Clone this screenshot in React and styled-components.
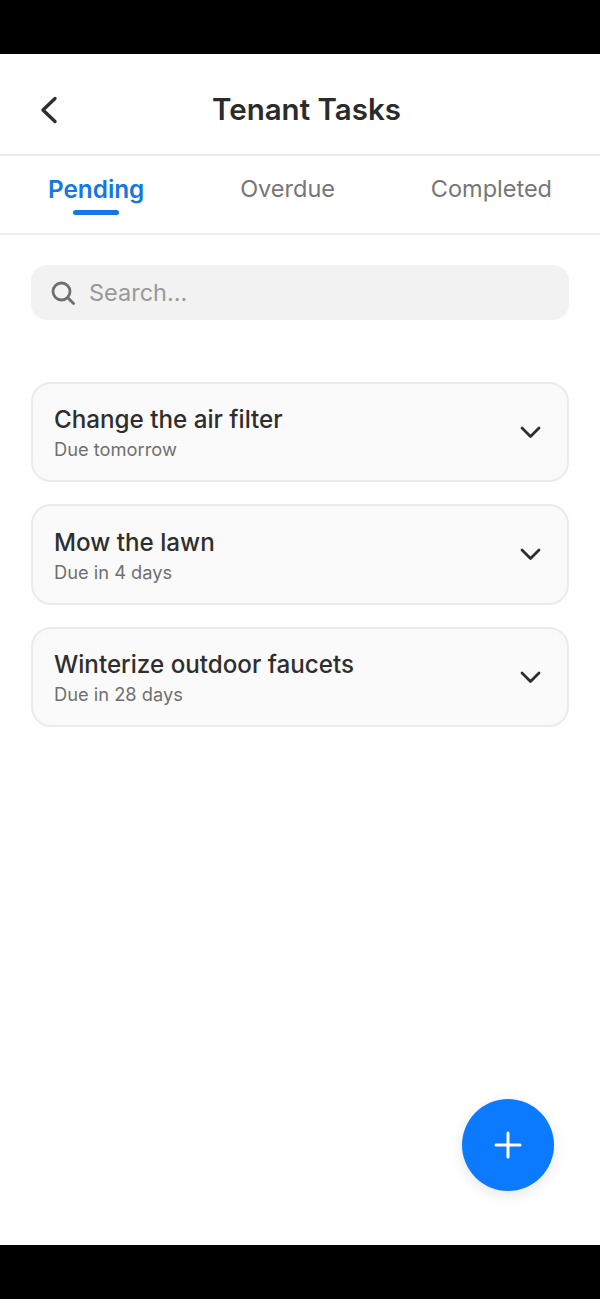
import styled, { createGlobalStyle } from "styled-components";

const GlobalStyle = createGlobalStyle`
  html, body {
    margin: 0;
    padding: 0;
    background: #000;
  }
  * {
    box-sizing: border-box;
  }
`;

const Page = styled.div`
  width: 600px;
  height: 1299px;
  padding: 54px 0;
  background: #000;
  font-family: Inter, "Liberation Sans", sans-serif;
`;

const Screen = styled.div`
  position: relative;
  height: 1191px;
  background: #fff;
`;

const Header = styled.header`
  display: flex;
  align-items: center;
  height: 102px;
  padding: 10px 46px 0 39px;
  border-bottom: 2px solid #ececec;
`;

const BackButton = styled.div`
  display: flex;
  width: 20px;
  height: 28px;
  margin-top: 1px;
  color: #2e2e2e;
`;

const Title = styled.h1`
  flex: 1;
  margin: 0;
  font-size: 29.5px;
  line-height: 34px;
  font-weight: 600;
  text-align: center;
  color: #2b2b2b;
`;

const Tabs = styled.nav`
  display: flex;
  justify-content: space-between;
  height: 79px;
  padding: 0 48px;
  border-bottom: 2px solid #efefef;
`;

const Tab = styled.div`
  position: relative;
  padding-top: 18px;
  font-size: ${(p) => (p.$active ? "24.3px" : "23.5px")};
  line-height: 30px;
  font-weight: ${(p) => (p.$active ? 600 : 400)};
  color: ${(p) => (p.$active ? "#1477e6" : "#767676")};
`;

const Underline = styled.span`
  position: absolute;
  left: 50%;
  bottom: 18px;
  width: 46px;
  height: 5px;
  margin-left: -23px;
  border-radius: 3px;
  background: #1477e6;
`;

const Content = styled.main`
  display: flex;
  flex-direction: column;
  padding: 30px 31px 0;
`;

const Search = styled.div`
  display: flex;
  align-items: center;
  gap: 14px;
  height: 55px;
  padding: 0 20px;
  border-radius: 16px;
  background: #f2f2f2;
  color: #6e6e6e;
  font-size: 23.5px;
`;

const Placeholder = styled.span`
  color: #999;
`;

const TaskList = styled.div`
  display: flex;
  flex-direction: column;
  gap: 22px;
  margin-top: 61.5px;
`;

const Card = styled.div`
  display: flex;
  align-items: center;
  justify-content: space-between;
  height: 100.5px;
  padding: 0 26.5px 0 21px;
  border: 2px solid #ebebeb;
  border-radius: 20px;
  background: #fafafa;
`;

const CardText = styled.div`
  display: flex;
  flex-direction: column;
  gap: 2px;
  padding-top: 3px;
`;

const TaskName = styled.div`
  font-size: 24.2px;
  line-height: 30px;
  font-weight: 500;
  color: #2e2e2e;
`;

const TaskDue = styled.div`
  font-size: 18.3px;
  line-height: 24px;
  color: #707070;
`;

const Fab = styled.div`
  position: absolute;
  right: 46px;
  bottom: 54px;
  display: flex;
  align-items: center;
  justify-content: center;
  width: 92px;
  height: 92px;
  border-radius: 50%;
  background: #0b7aff;
  box-shadow: 0 4px 14px rgba(0, 0, 0, 0.1);
`;

const tasks = [
  { name: "Change the air filter", due: "Due tomorrow" },
  { name: "Mow the lawn", due: "Due in 4 days" },
  { name: "Winterize outdoor faucets", due: "Due in 28 days" },
];

const App = () => {
  return (
    <Page>
      <GlobalStyle />
      <Screen>
        <Header>
          <BackButton>
            <svg width="20" height="28" viewBox="0 0 20 28" fill="none">
              <path d="M16 2.5 L4 14 L16 25.5" stroke="currentColor" strokeWidth="3.4" strokeLinecap="round" strokeLinejoin="round" />
            </svg>
          </BackButton>
          <Title>Tenant Tasks</Title>
        </Header>
        <Tabs>
          <Tab $active>
            Pending
            <Underline />
          </Tab>
          <Tab>Overdue</Tab>
          <Tab>Completed</Tab>
        </Tabs>
        <Content>
          <Search>
            <svg width="24" height="24" viewBox="0 0 24 24" fill="none" stroke="currentColor" strokeWidth="2.8" strokeLinecap="round">
              <circle cx="10.5" cy="10.5" r="8.5" />
              <path d="M17 17 L22.5 22.5" />
            </svg>
            <Placeholder>Search...</Placeholder>
          </Search>
          <TaskList>
            {tasks.map((task) => (
              <Card key={task.name}>
                <CardText>
                  <TaskName>{task.name}</TaskName>
                  <TaskDue>{task.due}</TaskDue>
                </CardText>
                <svg width="21" height="14" viewBox="0 0 21 14" fill="none">
                  <path d="M2 3 L10.5 11.5 L19 3" stroke="#2e2e2e" strokeWidth="2.8" strokeLinecap="round" strokeLinejoin="round" />
                </svg>
              </Card>
            ))}
          </TaskList>
        </Content>
        <Fab>
          <svg width="32" height="32" viewBox="0 0 32 32" fill="none">
            <path d="M16 4 V28 M4 16 H28" stroke="#fff" strokeWidth="3" strokeLinecap="round" />
          </svg>
        </Fab>
      </Screen>
    </Page>
  );
};

export default App;
